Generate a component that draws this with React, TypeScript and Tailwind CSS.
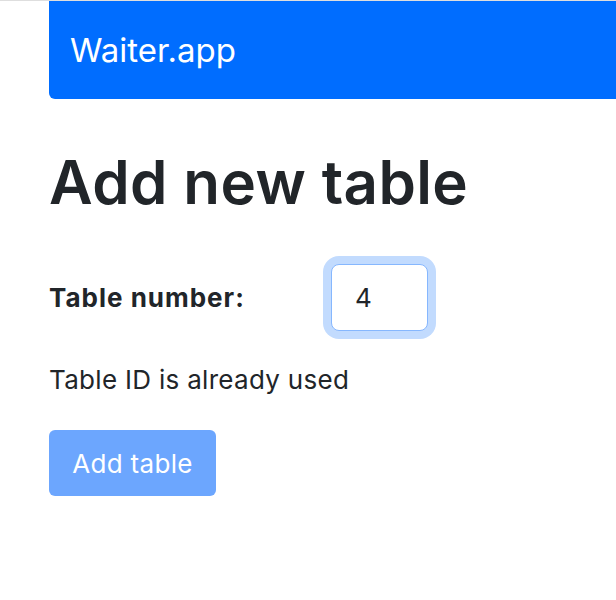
export default function App() {
  return (
    <div
      className="min-h-[600px] bg-white border-t border-[#dedede] text-[#212529]"
      style={{ fontFamily: 'Inter, "Noto Sans", sans-serif' }}
    >
      <div className="pl-[49px]">
        <nav className="h-[98px] bg-[#006dff] rounded-bl-[6px] flex items-center pl-[21px]">
          <span className="text-[33px] text-white leading-none">Waiter.app</span>
        </nav>
        <h1 className="mt-[47px] text-[60px] font-semibold leading-[1.2] tracking-[0.4px]">Add new table</h1>
        <div className="mt-[46px] flex items-center">
          <label className="w-[282px] text-[26px] font-bold tracking-[1px]">Table number:</label>
          <input
            type="text"
            defaultValue="4"
            className="w-[97px] h-[67px] border border-[#86b7fe] rounded-[8px] pl-[23px] text-[26px] outline-none shadow-[0_0_0_8px_#c2dbfe] bg-white text-[#212529]"
          />
        </div>
        <p className="mt-[29px] text-[26px] leading-[1.5] tracking-[0.3px]">Table ID is already used</p>
        <button className="mt-[31px] w-[167px] h-[66px] rounded-[6px] bg-[#6ca6fe] text-white text-[26px] tracking-[0.3px] flex items-center justify-center">
          Add table
        </button>
      </div>
    </div>
  );
}
